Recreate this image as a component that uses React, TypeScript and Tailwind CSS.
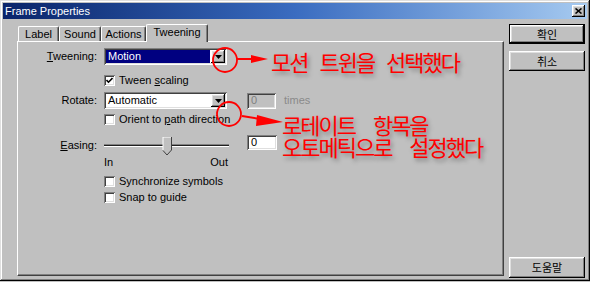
import React from 'react';

const raised =
  'shadow-[inset_-1px_-1px_0_#000,inset_1px_1px_0_#fff,inset_-2px_-2px_0_#808080,inset_2px_2px_0_#dfdfdf]';
const sunken =
  'shadow-[inset_1px_1px_0_#808080,inset_-1px_-1px_0_#fff,inset_2px_2px_0_#404040,inset_-2px_-2px_0_#dfdfdf]';

const DownArrow = () => (
  <svg width="7" height="4" viewBox="0 0 7 4">
    <polygon points="0,0 7,0 3.5,4" fill="#000" />
  </svg>
);

interface ComboProps {
  value: string;
  selected?: boolean;
}

const Combo: React.FC<ComboProps> = ({ value, selected }) => (
  <div className={`flex h-[17px] w-[123px] bg-white p-[2px] ${sunken}`}>
    <div
      className={`flex flex-1 items-center pl-[2px] mr-[1px] ${
        selected ? 'bg-[#000080] text-white' : 'text-black'
      }`}
    >
      {value}
    </div>
    <div className={`flex h-full w-[14px] items-center justify-center bg-[#c0c0c0] ${raised}`}>
      <DownArrow />
    </div>
  </div>
);

const CheckBox: React.FC<{ checked?: boolean; children: React.ReactNode }> = ({ checked, children }) => (
  <div className="ml-[86px] flex h-[13px] items-center">
    <div className={`flex h-[11px] w-[11px] items-center justify-center bg-white ${sunken}`}>
      {checked && (
        <svg width="7" height="7" viewBox="0 0 7 7">
          <polyline points="0.5,3 2.5,5.2 6.5,1" fill="none" stroke="#000" strokeWidth="1.6" />
        </svg>
      )}
    </div>
    <span className="ml-[4px]">{children}</span>
  </div>
);

const Slider = () => (
  <svg width="125" height="20" viewBox="0 0 125 20">
    <rect x="0" y="7" width="125" height="1" fill="#808080" />
    <rect x="0" y="8" width="125" height="1" fill="#202020" />
    <rect x="0" y="9" width="125" height="1" fill="#fff" />
    <polygon points="59,0 67,0 67,13 63,18 59,13" fill="#c0c0c0" />
    <polyline points="59,13 59,0 67,0" fill="none" stroke="#fff" strokeWidth="1" />
    <polyline points="67.5,0 67.5,13 63,18 59,13.5" fill="none" stroke="#404040" strokeWidth="1" />
  </svg>
);

const Tab: React.FC<{ w: string; active?: boolean; children: React.ReactNode }> = ({ w, active, children }) =>
  active ? (
    <div
      className={`relative z-10 -mb-[1px] flex h-[18px] ${w} justify-center rounded-t-[2px] border-l border-t border-r border-white border-r-[#404040] bg-[#c0c0c0] pt-[1px] shadow-[inset_-1px_0_0_#808080]`}
    >
      {children}
    </div>
  ) : (
    <div
      className={`flex h-[15px] ${w} justify-center rounded-t-[2px] border-l border-t border-r border-white border-r-[#404040] pt-[1px] shadow-[inset_-1px_0_0_#808080]`}
    >
      {children}
    </div>
  );

const Button: React.FC<{ h: string; isDefault?: boolean; children: React.ReactNode }> = ({ h, isDefault, children }) =>
  isDefault ? (
    <div className={`${h} w-[76px] border border-black`}>
      <div className={`flex h-full w-full items-center justify-center ${raised}`}>{children}</div>
    </div>
  ) : (
    <div className={`flex ${h} w-[76px] items-center justify-center ${raised}`}>{children}</div>
  );

const redText =
  "absolute whitespace-nowrap font-['Noto_Sans_CJK_KR',sans-serif] text-[22px] tracking-[-2px] text-[#ff0000] [text-shadow:2px_3px_4px_rgba(0,0,0,0.35)]";

export default function App() {
  return (
    <div className="relative h-[282px] w-[590px] overflow-hidden bg-[#c0c0c0] text-[11px] leading-[13px] text-black font-['Liberation_Sans',Arial,sans-serif]">
      <div
        className={`flex h-[281px] w-[590px] flex-col p-[3px] shadow-[inset_-1px_-1px_0_#000,inset_1px_1px_0_#dfdfdf,inset_-2px_-2px_0_#808080,inset_2px_2px_0_#fff]`}
      >
        {/* title bar */}
        <div className="flex h-[16px] items-center justify-between bg-linear-to-r from-[#0a246a] via-[#3a6cc0] to-[#a6caf0] pl-[2px] pr-[2px]">
          <span className="text-[11px] text-white">Frame Properties</span>
          <div className={`flex h-[12px] w-[13px] items-center justify-center bg-[#c0c0c0] ${raised}`}>
            <svg width="7" height="6" viewBox="0 0 7 6">
              <path d="M0.5 0.5 L6.5 5.5 M6.5 0.5 L0.5 5.5" stroke="#000" strokeWidth="1.6" />
            </svg>
          </div>
        </div>

        {/* body */}
        <div className="flex flex-1 pl-[14px] pr-[2px] pt-[5px]">
          <div className="flex w-[487px] flex-col">
            <div className="flex h-[17px] items-end pl-[1px]">
              <Tab w="w-[41px]">Label</Tab>
              <Tab w="w-[42px]">Sound</Tab>
              <Tab w="w-[45px]">Actions</Tab>
              <Tab w="w-[62px]" active>
                Tweening
              </Tab>
            </div>
            <div className="flex h-[235px] flex-col border-l border-t border-r border-b border-white border-r-[#404040] border-b-[#404040] pt-[6px] shadow-[inset_-1px_-1px_0_#808080]">
              <div className="flex h-[17px] items-center">
                <span className="w-[79px] text-right">
                  <span className="underline">T</span>weening:
                </span>
                <div className="ml-[7px]">
                  <Combo value="Motion" selected />
                </div>
              </div>

              <div className="mt-[9px]">
                <CheckBox checked>
                  Tween <span className="underline">s</span>caling
                </CheckBox>
              </div>

              <div className="mt-[5px] flex h-[17px] items-center">
                <span className="w-[79px] text-right">Rotate:</span>
                <div className="ml-[7px]">
                  <Combo value="Automatic" />
                </div>
                <div className={`ml-[20px] flex h-[16px] w-[29px] items-center bg-[#c0c0c0] pl-[4px] text-[#808080] ${sunken}`}>
                  0
                </div>
                <span className="ml-[8px] text-[#8a8a8a]">times</span>
              </div>

              <div className="mt-[4px]">
                <CheckBox>
                  Orient to <span className="underline">p</span>ath direction
                </CheckBox>
              </div>

              <div className="mt-[9px] flex h-[21px] items-start">
                <span className="mt-[4px] w-[79px] text-right">
                  <span className="underline">E</span>asing:
                </span>
                <div className="ml-[7px] mt-[2px] flex">
                  <Slider />
                </div>
                <div className={`ml-[18px] flex h-[15px] w-[30px] items-center bg-white pl-[4px] ${sunken}`}>0</div>
              </div>

              <div className="ml-[86px] flex h-[13px] w-[124px] items-center justify-between">
                <span>In</span>
                <span>Out</span>
              </div>

              <div className="mt-[6px]">
                <CheckBox>Synchronize symbols</CheckBox>
              </div>
              <div className="mt-[3px]">
                <CheckBox>Snap to guide</CheckBox>
              </div>
            </div>
          </div>

          <div className="ml-[5px] flex w-[76px] flex-col font-['Noto_Sans_CJK_KR',sans-serif] text-[11px]">
            <Button h="h-[20px]" isDefault>
              확인
            </Button>
            <div className="mt-[7px]">
              <Button h="h-[20px]">취소</Button>
            </div>
            <div className="mt-auto">
              <Button h="h-[21px]">도움말</Button>
            </div>
          </div>
        </div>
      </div>

      {/* annotations */}
      <svg className="pointer-events-none absolute left-0 top-0" width="590" height="282" viewBox="0 0 590 282">
        <circle cx="225" cy="60" r="12" fill="none" stroke="#ff0000" strokeWidth="1.8" />
        <line x1="237" y1="59" x2="254" y2="59" stroke="#ff0000" strokeWidth="2" />
        <polygon points="251,55 268,59 251,63" fill="#ff0000" />
        <circle cx="229" cy="114" r="12" fill="none" stroke="#ff0000" strokeWidth="1.8" />
        <line x1="242" y1="116" x2="260" y2="119" stroke="#ff0000" strokeWidth="2" />
        <polygon points="257,115 283,122 256,126" fill="#ff0000" />
      </svg>
      <div className={`${redText} left-[271px] top-[51px] leading-[20px] [word-spacing:9px]`}>
        모션 트윈을 선택했다
      </div>
      <div className={`${redText} left-[282px] top-[113px] leading-[22px] [word-spacing:15px]`}>
        로테이트 항목을
        <br />
        오토메틱으로 설정했다
      </div>
    </div>
  );
}
